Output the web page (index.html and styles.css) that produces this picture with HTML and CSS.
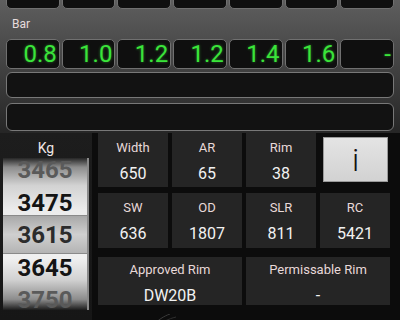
FILE: index.html
```html
<!DOCTYPE html>
<html>
<head>
  <title>Tyre Load Calculator</title>
  <link rel="stylesheet" href="styles.css">
</head>
<body>
  <div class="panel">
    <div class="top">
      <div class="strip">
        <div class="lcd"></div><div class="lcd"></div><div class="lcd"></div><div class="lcd"></div>
        <div class="lcd"></div><div class="lcd"></div><div class="lcd"></div>
      </div>

      <div class="bar-label">Bar</div>

      <div class="strip bars">
        <div class="lcd">0.8</div>
        <div class="lcd">1.0</div>
        <div class="lcd">1.2</div>
        <div class="lcd">1.2</div>
        <div class="lcd">1.4</div>
        <div class="lcd">1.6</div>
        <div class="lcd">-</div>
      </div>

      <div class="wide-box first"></div>
      <div class="wide-box"></div>
    </div>

    <div class="bottom">
      <div class="kg-col">
        <div class="kg-label">Kg</div>
        <div class="picker">
          <div class="pick-list">
            <div class="pick-item faded">3465</div>
            <div class="pick-item">3475</div>
            <div class="pick-item selected">3615</div>
            <div class="pick-item">3645</div>
            <div class="pick-item faded">3750</div>
          </div>
        </div>
      </div>

      <div class="specs">
        <div class="spec"><span class="name">Width</span><span class="value">650</span></div>
        <div class="spec"><span class="name">AR</span><span class="value">65</span></div>
        <div class="spec"><span class="name">Rim</span><span class="value">38</span></div>
        <button class="info" type="button">i</button>

        <div class="spec"><span class="name">SW</span><span class="value">636</span></div>
        <div class="spec"><span class="name">OD</span><span class="value">1807</span></div>
        <div class="spec"><span class="name">SLR</span><span class="value">811</span></div>
        <div class="spec"><span class="name">RC</span><span class="value">5421</span></div>

        <div class="spec rim"><span class="name">Approved Rim</span><span class="value">DW20B</span></div>
        <div class="spec rim"><span class="name">Permissable Rim</span><span class="value">-</span></div>

        <div class="logo">
          <svg width="40" height="12" viewBox="0 0 40 12">
            <path d="M4 12 C10 6, 16 2, 22 0" stroke="#3a3a3a" stroke-width="1" fill="none"/>
            <path d="M10 12 C14 8, 20 5, 28 3" stroke="#2e2e2e" stroke-width="1" fill="none"/>
          </svg>
        </div>
      </div>
    </div>
  </div>
</body>
</html>
```

FILE: styles.css
```css
body {
  margin: 0;
  background-color: #0c0c0c;
  font-family: Roboto, "Liberation Sans", sans-serif;
}

.panel {
  width: 400px;
  height: 320px;
  overflow: hidden;
}

/* upper section with the pressure displays */

.top {
  height: 133px;
  padding: 0 6px;
  box-sizing: border-box;
  background: linear-gradient(#5e5e5e, #3c3c3c 60%, #262626);
  overflow: hidden;
}

.strip {
  display: grid;
  grid-template-columns: repeat(7, 1fr);
  column-gap: 2px;
  height: 30px;
  margin-top: -21px;
}

.strip.bars {
  height: 29px;
  margin-top: 0;
}

.lcd {
  background-color: #0f0f0f;
  border: 1px solid #707070;
  border-radius: 5px;
  box-sizing: border-box;
  text-align: right;
  padding: 0 2px 0 0;
  font-family: Roboto, "Liberation Sans", sans-serif;
  font-size: 24px;
  line-height: 28px;
  color: #3ae43a;
  text-shadow: 0 0 3px rgba(70, 255, 70, 0.45);
}

.bar-label {
  height: 30px;
  line-height: 31px;
  padding-left: 6px;
  font-size: 12px;
  color: #e6dcdc;
}

.wide-box {
  height: 28px;
  margin-top: 5px;
  background-color: #121212;
  border: 1.5px solid #787878;
  border-radius: 6px;
  box-sizing: border-box;
}

.wide-box.first {
  height: 26px;
  margin-top: 4px;
}

/* lower section */

.bottom {
  display: flex;
  height: 187px;
}

.kg-col {
  width: 92px;
  background: linear-gradient(#1d1d1d, #161616);
}

.kg-label {
  height: 25px;
  line-height: 30px;
  text-align: center;
  font-size: 14px;
  color: #efe6e6;
}

.picker {
  height: 152px;
  margin: 0 3px 0 3px;
  overflow: hidden;
  border-right: 2px solid #8a8a8a;
  background: linear-gradient(#262626 0%, #8c8c8c 6%, #d2d2d2 18%, #ececec 34%, #f0f0f0 66%, #d2d2d2 80%, #8c8c8c 93%, #1c1c1c 100%);
}

.pick-list {
  position: relative;
  z-index: 0;
  margin-top: -4px;
}

.pick-item {
  height: 32.5px;
  line-height: 32.5px;
  text-align: center;
  font-size: 24px;
  font-weight: bold;
  color: #141414;
  position: relative;
}

.pick-item.faded {
  color: #5a5a5a;
}

.pick-item.selected {
  color: #2c2c2c;
}

.pick-item.selected::before {
  content: "";
  position: absolute;
  left: 0;
  right: 0;
  top: -4px;
  bottom: -2px;
  z-index: -1;
  border-top: 1px solid #8a8a8a;
  border-bottom: 1px solid #8a8a8a;
  background: linear-gradient(#a8a8a8, #cfcfcf 50%, #b4b4b4);
}

.specs {
  margin-left: 6px;
  display: grid;
  grid-template-columns: repeat(4, 70px);
  grid-template-rows: 54px 55px 51px;
  column-gap: 4px;
  row-gap: 6px;
}

.spec {
  display: flex;
  flex-direction: column;
  align-items: center;
  padding-top: 7px;
  box-sizing: border-box;
  background-color: #252525;
}

.spec .name {
  font-size: 13px;
  line-height: 16px;
  color: #e8d9d9;
}

.spec .value {
  margin-top: 8px;
  font-size: 16px;
  line-height: 20px;
  color: #f2f2f2;
}

.spec.rim {
  grid-column: span 2;
  margin-top: 3px;
  padding-top: 5px;
}

.info {
  margin: 4px 2px 5px 3px;
  padding: 0;
  border: 1px solid #9a9a9a;
  background: linear-gradient(#e4e4e4, #d2d2d2);
  font-family: Roboto, sans-serif;
  font-size: 32px;
  font-weight: 300;
  color: #111;
  line-height: 40px;
}

.logo {
  grid-column: span 4;
  padding-left: 50px;
  height: 12px;
}
```
